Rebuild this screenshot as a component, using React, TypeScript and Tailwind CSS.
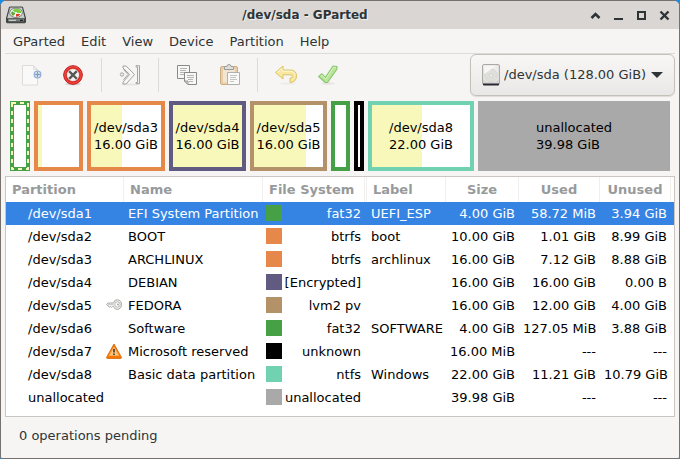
import React, { useState } from "react";

type Partition = {
  path: string;
  mark?: "key" | "warning";
  name: string;
  fs: string;
  color: string;
  label: string;
  size: string;
  used: string;
  unused: string;
};

const partitions: Partition[] = [
  { path: "/dev/sda1", name: "EFI System Partition", fs: "fat32", color: "bg-[#46a046]", label: "UEFI_ESP", size: "4.00 GiB", used: "58.72 MiB", unused: "3.94 GiB" },
  { path: "/dev/sda2", name: "BOOT", fs: "btrfs", color: "bg-[#e58849]", label: "boot", size: "10.00 GiB", used: "1.01 GiB", unused: "8.99 GiB" },
  { path: "/dev/sda3", name: "ARCHLINUX", fs: "btrfs", color: "bg-[#e58849]", label: "archlinux", size: "16.00 GiB", used: "7.12 GiB", unused: "8.88 GiB" },
  { path: "/dev/sda4", name: "DEBIAN", fs: "[Encrypted]", color: "bg-[#625b81]", label: "", size: "16.00 GiB", used: "16.00 GiB", unused: "0.00 B" },
  { path: "/dev/sda5", mark: "key", name: "FEDORA", fs: "lvm2 pv", color: "bg-[#b39169]", label: "", size: "16.00 GiB", used: "12.00 GiB", unused: "4.00 GiB" },
  { path: "/dev/sda6", name: "Software", fs: "fat32", color: "bg-[#46a046]", label: "SOFTWARE", size: "4.00 GiB", used: "127.05 MiB", unused: "3.88 GiB" },
  { path: "/dev/sda7", mark: "warning", name: "Microsoft reserved", fs: "unknown", color: "bg-black", label: "", size: "16.00 MiB", used: "---", unused: "---" },
  { path: "/dev/sda8", name: "Basic data partition", fs: "ntfs", color: "bg-[#70d2b1]", label: "Windows", size: "22.00 GiB", used: "11.21 GiB", unused: "10.79 GiB" },
  { path: "unallocated", name: "", fs: "unallocated", color: "bg-[#a9a9a9]", label: "", size: "39.98 GiB", used: "---", unused: "---" },
];

type Block = { border: string; used: number; text?: [string, string] };

const blocks: Block[] = [
  { border: "border-[#46a046] bg-white", used: 0 },
  { border: "border-[#e58849] bg-white", used: 10 },
  { border: "border-[#e58849] bg-white", used: 44, text: ["/dev/sda3", "16.00 GiB"] },
  { border: "border-[#625b81] bg-white", used: 100, text: ["/dev/sda4", "16.00 GiB"] },
  { border: "border-[#b39169] bg-white", used: 75, text: ["/dev/sda5", "16.00 GiB"] },
  { border: "border-[#46a046] bg-white", used: 0 },
  { border: "border-black bg-white", used: 0 },
  { border: "border-[#70d2b1] bg-white", used: 51, text: ["/dev/sda8", "22.00 GiB"] },
  { border: "border-[#a9a9a9] bg-[#a9a9a9]", used: 0, text: ["unallocated", "39.98 GiB"] },
];

function AppIcon() {
  return (
    <svg width="20" height="18" viewBox="0 0 20 18" aria-hidden="true">
      <path d="M3.500 1h13l3 11v4q0 .8-.8.8H1.300Q.5 16.800.5 16v-4z" fill="#3c403e" stroke="#2e3432" strokeWidth=".8" />
      <path d="M4 1.500h12l2.800 10.800H1.200z" fill="#c9cdc9" />
      <ellipse cx="10" cy="6.800" rx="6.300" ry="4.700" fill="#f5f6f2" stroke="#6d736c" strokeWidth=".9" />
      <path d="M10 3c4 0 5.500 2 5 4l-5 .3-3.500-3Q8 3 10 3z" fill="#7ad03b" />
      <path d="M6 5.200 9.500 7.500 7 10Q4 7.500 6 5.200z" fill="#58a836" />
      <path d="M10 8h4.500Q13 10.600 10 10.800z" fill="#e2392b" />
      <circle cx="10" cy="7" r="1.100" fill="#fff" />
      <path d="M2 13h16v2.600H2z" fill="#777d79" />
      <path d="M3 14.300h7" stroke="#e7e9e6" strokeWidth=".9" />
      <path d="M14 14.300h3" stroke="#222" strokeWidth="1.200" />
    </svg>
  );
}

function NewIcon() {
  return (
    <svg width="24" height="24" viewBox="0 0 24 24" aria-hidden="true">
      <path d="M3.500 2.500h11l4 4v15.500h-15z" fill="#f9f9f9" stroke="#dbdcda" />
      <path d="M14.500 2.500v4h4z" fill="#eeeeec" stroke="#dbdcda" strokeWidth=".8" />
      <circle cx="18.500" cy="11.500" r="3.300" fill="#f4f7fb" stroke="#94aed1" strokeWidth="1.300" />
      <path d="M18.500 9v5M16 11.500h5" stroke="#7f9dc6" strokeWidth="1.400" />
    </svg>
  );
}

function DeleteIcon() {
  return (
    <svg width="24" height="24" viewBox="0 0 24 24" aria-hidden="true">
      <ellipse cx="12" cy="21" rx="8" ry="1.500" fill="#d8d5d2" />
      <circle cx="12" cy="12" r="9.300" fill="#e8251f" stroke="#b80f0f" strokeWidth="1" />
      <circle cx="12" cy="12" r="8.300" fill="none" stroke="#f36b66" strokeWidth=".7" />
      <circle cx="12" cy="12" r="6.500" fill="#f3f3f1" stroke="#b92522" strokeWidth=".6" />
      <path d="m9 9 6 6m0-6-6 6" stroke="#555753" strokeWidth="2.400" strokeLinecap="square" />
    </svg>
  );
}

function ResizeIcon() {
  return (
    <svg width="24" height="24" viewBox="0 0 24 24" aria-hidden="true">
      <ellipse cx="12" cy="21.500" rx="9" ry="1" fill="#e7e5e3" />
      <g fill="#f1f1ef" stroke="#9b9c99" strokeWidth=".9" strokeLinejoin="round">
        <circle cx="4" cy="11.500" r="1.700" />
        <path d="M5 3h3.200l8.300 8.500L8.200 21H5v-2l6.500-7.500L5 5z" />
        <path d="M5.500 6.500 10 11.500l-4.500 5.200" fill="none" />
        <path d="M18 2.700h3.500v18H18v-1.200h1.500V4H18z" />
      </g>
      <path d="M7 4l7.800 7.500L7 20" fill="none" stroke="#fff" strokeWidth=".9" />
    </svg>
  );
}

function CopyIcon() {
  return (
    <svg width="24" height="24" viewBox="0 0 24 24" aria-hidden="true">
      <path d="M2.500 2.500h12v13h-12z" fill="#f7f7f6" stroke="#898b87" />
      <path d="M5 5.500h7M5 7.500h6M5 9.500h7M5 11.500h4" stroke="#b5b7b4" />
      <path d="M9.500 9.500h12v12H13l-3.500-3.500z" fill="#f7f7f6" stroke="#898b87" />
      <path d="M12 12.500h7M12 14.500h7M13 16.500h5M14 18.500h4" stroke="#b5b7b4" />
      <path d="M9.500 18H13v3.500z" fill="#d5d6d3" stroke="#898b87" strokeWidth=".8" />
    </svg>
  );
}

function PasteIcon() {
  return (
    <svg width="24" height="24" viewBox="0 0 24 24" aria-hidden="true">
      <rect x="3.500" y="3.500" width="17" height="18" rx="1.500" fill="#e8ceab" stroke="#cfae83" />
      <path d="M6 6h12v13.500H6z" fill="#f2e5d2" />
      <path d="M7.500 6.500V4.200q0-.7.700-.7H10q0-2 2-2t2 2h1.800q.7 0 .7.700v2.300z" fill="#dfe0de" stroke="#999b98" />
      <path d="M10.500 9.500h12v12h-12z" fill="#f9f9f8" stroke="#b0b1af" />
      <path d="M13 12.500h7M13 14.500h6M13 16.500h7M13 18.500h4" stroke="#c3c4c2" />
    </svg>
  );
}

function UndoIcon() {
  return (
    <svg width="24" height="24" viewBox="0 0 24 24" aria-hidden="true">
      <ellipse cx="14" cy="20.500" rx="8" ry="1" fill="#edebe8" />
      <path d="M1.500 9.500 9 3v4h7q6.500 0 6.500 6t-6.500 6.500V15.200q2.700-.3 2.700-1.900 0-1.500-2.700-1.500H9v4.200z" fill="#f7e7a0" stroke="#dcc365" strokeLinejoin="round" />
      <path d="M3.300 9.500 8 5.300V8.200h7.800q5.300 0 5.300 4.600" fill="none" stroke="#fdf8dc" strokeWidth=".9" />
    </svg>
  );
}

function ApplyIcon() {
  return (
    <svg width="24" height="24" viewBox="0 0 24 24" aria-hidden="true">
      <ellipse cx="12" cy="20.500" rx="7" ry="1.200" fill="#e5e4e1" />
      <path d="M2.700 13.500 6 10.800l3.500 3.500L17 3l4 .5-.3 3L11.500 19.500H9.300z" fill="#b9e596" stroke="#8cc774" strokeWidth="1.200" strokeLinejoin="round" />
      <path d="m4.500 13.300 1.400-1.100 3.900 3.800L17.500 4.300l2.200.3" fill="none" stroke="#dcf5c8" strokeWidth=".9" />
    </svg>
  );
}

function DiskIcon() {
  return (
    <svg className="shrink-0" width="18" height="22" viewBox="0 0 18 22" aria-hidden="true">
      <rect x=".5" y=".5" width="17" height="20" rx="1.500" fill="#d6d6d3" stroke="#aaa9a6" />
      <path d="M1.500 1.500h15v13.500L13 18H5l-3.500-3z" fill="#ececea" />
      <circle cx="9" cy="11.500" r="6.500" fill="#dededb" stroke="#cbcbc8" strokeWidth=".6" />
      <path d="M1.500 1.500h13L2.500 10z" fill="#f6f6f5" />
      <circle cx="9" cy="11.500" r="1.500" fill="#f4f4f3" stroke="#bdbdba" strokeWidth=".5" />
      <path d="M1 19.500h16v1q0 .9-.9.900H1.900q-.9 0-.9-.9z" fill="#2b2735" />
    </svg>
  );
}

function KeyIcon() {
  return (
    <svg width="16" height="16" viewBox="0 0 16 16" aria-label="Locked">
      <path d="M.5 7.500 2 6h5.500Q8.300 2.700 11.200 2.700 15.500 3.200 15.500 7.500T11.200 12.500Q8.500 12.300 7.500 9.500H6.500l-1 1-1-1-1 .7z" fill="#eeefed" stroke="#a0a29e" strokeWidth=".9" strokeLinejoin="round" />
      <circle cx="11.500" cy="7.500" r="2.700" fill="#fbfbfa" stroke="#b4b6b2" strokeWidth=".9" />
      <circle cx="12" cy="7.500" r=".9" fill="#a0a29e" />
      <path d="M2 7.500h5.500" stroke="#c3c5c1" strokeWidth=".8" />
    </svg>
  );
}

function WarningIcon() {
  return (
    <svg width="16" height="16" viewBox="0 0 16 16" aria-label="Warning">
      <path d="M8 1 15.500 14.500q0 .9-.9.900H1.400q-.9 0-.9-.9z" fill="#f57900" stroke="#d96a0b" strokeWidth=".9" strokeLinejoin="round" />
      <path d="M8 4 12.800 12.500H3.200z" fill="#fbc583" stroke="#fcb061" strokeWidth=".7" />
      <path d="M8 6v3.500M8 10.500v1.600" stroke="#45403a" strokeWidth="1.700" />
    </svg>
  );
}

const windowButtons = [
  { name: "Roll up", path: <path d="m1.500 8 4-4 4 4" fill="none" stroke="#2e3436" strokeWidth="2.600" /> },
  { name: "Minimize", path: <path d="M1 9h9" stroke="#2e3436" strokeWidth="2" /> },
  { name: "Maximize", path: <path d="M2 2h7v7H2z" fill="none" stroke="#2e3436" strokeWidth="2" /> },
  { name: "Close", path: <path d="m1.500 1.500 8 8m0-8-8 8" stroke="#2e3436" strokeWidth="2.400" /> },
];

const menus = ["GParted", "Edit", "View", "Device", "Partition", "Help"];

function ToolButton({ name, children }: { name: string; children: React.ReactNode }) {
  return (
    <button type="button" aria-label={name} className="flex w-[42px] items-center justify-center">
      {children}
    </button>
  );
}

function ToolSeparator() {
  return <div className="mx-[7px] w-px bg-[#dddbd8]" />;
}

function PartitionBlock({ block, selected }: { block: Block; selected: boolean }) {
  return (
    <div className={"relative grid min-w-0 border-4 " + block.border}>
      <div className="bg-[#f8f8ba] [grid-area:1/1]" style={{ width: `${block.used}%` }} />
      {block.text && (
        <div className="place-self-center whitespace-nowrap leading-[17px] text-black [grid-area:1/1]">
          <div>{block.text[0]}</div>
          <div>{block.text[1]}</div>
        </div>
      )}
      {selected && (
        <svg className="absolute -top-1 -left-1 h-[calc(100%+8px)] w-[calc(100%+8px)]" aria-hidden="true">
          <rect
            x="2"
            y="2"
            className="h-[calc(100%-4px)] w-[calc(100%-4px)]"
            fill="none"
            stroke="#f8f8ba"
            strokeWidth="2"
            strokeDasharray="4 4"
          />
        </svg>
      )}
    </div>
  );
}

const headCell = "h-[25px] border-r border-[#f1f0ef] p-0 px-1.5 font-bold";
const numCell = "px-1 text-right";

export default function App() {
  const [selected, setSelected] = useState(0);

  return (
    <div className="min-h-screen bg-[#0c8ff0] font-['DejaVu_Sans',sans-serif] text-[13px] leading-4 text-[#2e3436]">
      <div className="flex min-h-screen flex-col overflow-hidden rounded-t-md rounded-b-xs border border-[#77716e] bg-[#f6f5f4]">
        <header className="flex h-7 items-center bg-[#dad6d3] pr-[3px] pl-[5px]">
          <AppIcon />
          <h1 className="flex-1 text-center text-[12px] font-bold [text-shadow:1px_1px_0_#f4f2f0]">/dev/sda - GParted</h1>
          <div className="flex">
            {windowButtons.map((b) => (
              <button key={b.name} type="button" aria-label={b.name} className="flex h-6 w-[23px] items-center justify-center">
                <svg width="11" height="12" viewBox="0 -1 11 12" aria-hidden="true">{b.path}</svg>
              </button>
            ))}
          </div>
        </header>

        <div className="flex flex-1 flex-col px-1">
          <nav className="flex h-[25px] items-center border-b border-[#dddbd8] pt-0.5">
            {menus.map((m) => (
              <button key={m} type="button" className="px-2">{m}</button>
            ))}
          </nav>

          <div className="flex h-[42px] items-stretch justify-between">
            <div className="flex py-1 pl-[5px]">
              <ToolButton name="New"><NewIcon /></ToolButton>
              <ToolButton name="Delete"><DeleteIcon /></ToolButton>
              <ToolSeparator />
              <ToolButton name="Resize/Move"><ResizeIcon /></ToolButton>
              <ToolSeparator />
              <ToolButton name="Copy"><CopyIcon /></ToolButton>
              <ToolButton name="Paste"><PasteIcon /></ToolButton>
              <ToolSeparator />
              <ToolButton name="Undo"><UndoIcon /></ToolButton>
              <ToolButton name="Apply"><ApplyIcon /></ToolButton>
            </div>
            <label className="flex items-center gap-1 rounded-md border border-[#c6c0ba] bg-linear-to-b from-[#f8f7f6] to-[#eae8e6] px-[11px] shadow-[0_1px_1px_#dedbd8]">
              <DiskIcon />
              <select aria-label="Device" className="appearance-none bg-transparent outline-none">
                <option>/dev/sda (128.00 GiB)</option>
              </select>
              <svg width="12" height="6" viewBox="0 0 12 6" aria-hidden="true">
                <path d="M0 0h12L6 6z" fill="#2e3436" />
              </svg>
            </label>
          </div>

          <div className="mx-[5px] mt-[5px] grid h-[70px] grid-cols-[20fr_49fr_78fr_77fr_77fr_19fr_10fr_106fr_192fr] gap-1">
            {blocks.map((b, i) => (
              <PartitionBlock key={i} block={b} selected={i === selected} />
            ))}
          </div>

          <main className="mt-[5px] flex-1 border border-[#cbc6c1] bg-white">
            <table className="w-full table-fixed border-separate border-spacing-0 whitespace-nowrap">
              <colgroup>
                <col className="w-[118px]" />
                <col className="w-[139px]" />
                <col className="w-[102px]" />
                <col className="w-[2px]" />
                <col className="w-[79px]" />
                <col className="w-[73px]" />
                <col className="w-[81px]" />
                <col className="w-[71px]" />
                <col className="w-[3px]" />
              </colgroup>
              <thead className="text-[#979a9b]">
                <tr>
                  <th className={headCell + " text-left"}>Partition</th>
                  <th className={headCell + " text-left"}>Name</th>
                  <th className={headCell + " text-left"}>File System</th>
                  <td className="border-r border-[#f1f0ef] p-0" />
                  <th className={headCell + " text-left"}>Label</th>
                  <th className={headCell + " text-center"}>Size</th>
                  <th className={headCell + " text-center"}>Used</th>
                  <th className={headCell + " text-center"}>Unused</th>
                  <td className="p-0" />
                </tr>
              </thead>
              <tbody>
                {partitions.map((p, i) => (
                  <tr
                    key={p.path}
                    onClick={() => setSelected(i)}
                    className={"h-[23px] leading-[17px] " + (i === selected ? "bg-[#3584e4] text-white" : "text-black")}
                  >
                    <td className="p-0 pr-0.5 pl-[22px]">
                      <div className="flex items-start justify-between">
                        <span>{p.path}</span>
                        {p.mark === "key" && <KeyIcon />}
                        {p.mark === "warning" && <WarningIcon />}
                      </div>
                    </td>
                    <td className="p-0 pl-1">{p.name}</td>
                    <td className="p-0 pr-1 pl-[3px]">
                      <div className="flex items-start justify-between">
                        <span className={"size-4 shrink-0 " + p.color} />
                        <span>{p.fs}</span>
                      </div>
                    </td>
                    <td className="p-0" />
                    <td className="p-0 pl-1">{p.label}</td>
                    <td className={numCell}>{p.size}</td>
                    <td className={numCell}>{p.used}</td>
                    <td className={numCell}>{p.unused}</td>
                    <td className="p-0" />
                  </tr>
                ))}
              </tbody>
            </table>
          </main>

          <footer className="flex h-[41px] items-center px-3.5 pb-1">0 operations pending</footer>
        </div>
      </div>
    </div>
  );
}
